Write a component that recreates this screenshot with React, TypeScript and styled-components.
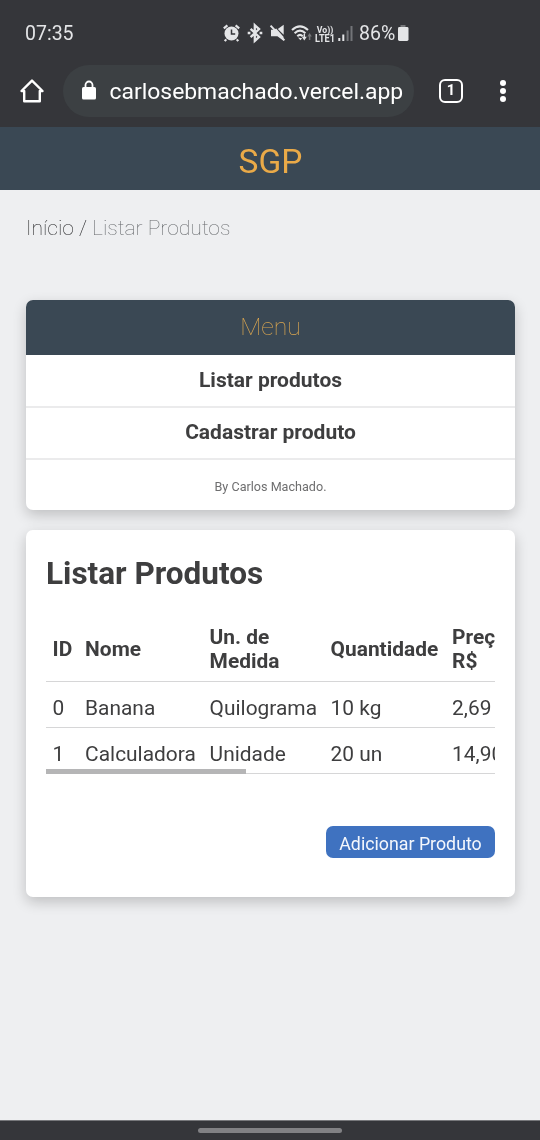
import React from 'react';
import styled, { createGlobalStyle } from 'styled-components';

const GlobalStyle = createGlobalStyle`
  *, *::before, *::after { box-sizing: border-box; }
  body {
    margin: 0;
    background: #eeeff1;
    color: #3e3e3f;
    font-family: Roboto, 'Liberation Sans', sans-serif;
  }
`;

const Screen = styled.div`
  display: flex;
  flex-direction: column;
  width: 540px;
  height: 1140px;
  overflow: hidden;
  will-change: transform;
`;

const BrowserChrome = styled.header`
  height: 127px;
  flex: none;
  background: #35363a;
  color: #fff;
`;

const StatusBar = styled.div`
  display: flex;
  align-items: center;
  height: 65px;
  padding: 2px 0 0 25px;
  color: #e4e5e7;
`;

const Clock = styled.span`
  width: 197px;
  font-size: 19.5px;
  line-height: 22px;
`;

const StatusIcons = styled.svg`
  display: block;
  width: 134px;
  height: 24px;
  margin: -2px 3px 0 0;
`;

const Battery = styled.span`
  font-size: 19.5px;
  line-height: 22px;
  width: 36px;
`;

const BatteryIcon = styled.svg`
  width: 12px;
  height: 18px;
  margin: -2px 0 0 2px;
`;

const AddressRow = styled.div`
  display: flex;
  align-items: center;
  height: 52px;
  padding-left: 19px;
`;

const HomeIcon = styled.svg`
  width: 26px;
  height: 26px;
  margin-right: 18px;
`;

const AddressPill = styled.div`
  display: flex;
  align-items: center;
  width: 351px;
  height: 52px;
  padding-left: 18px;
  border-radius: 26px;
  background: #3c4043;
`;

const LockIcon = styled.svg`
  width: 16px;
  height: 20px;
  margin: -2px 12.5px 0 0;
`;

const Url = styled.span`
  padding-top: 2px;
  font-size: 22.9px;
  line-height: 30px;
  white-space: nowrap;
`;

const TabCount = styled.span`
  display: flex;
  align-items: center;
  justify-content: center;
  width: 24px;
  height: 24px;
  margin-left: 25px;
  border: 2.4px solid #fff;
  border-radius: 6px;
  font-size: 14.5px;
  font-weight: 700;
  line-height: 16px;
`;

const MoreIcon = styled.svg`
  width: 8px;
  height: 24px;
  margin-left: 36px;
`;

const TitleBar = styled.div`
  display: flex;
  flex: none;
  align-items: center;
  justify-content: center;
  height: 63px;
  padding: 5px 0 0 1px;
  background: #3a4854;
  color: #eaaa48;
  font-size: 33.5px;
`;

const Page = styled.main`
  flex: 1;
  padding: 23px 25px 0 26px;
`;

const Breadcrumb = styled.nav`
  height: 87px;
  font-size: 21.1px;
  font-weight: 100;
  line-height: 30px;
  color: #202123;
`;

const Current = styled.span`
  color: #66696c;
`;

const Card = styled.section`
  border-radius: 7px;
  background: #fff;
  box-shadow: 0 5px 14px rgba(0, 0, 0, 0.2);
`;

const MenuCard = styled(Card)`
  height: 210px;
  margin-bottom: 20px;
  overflow: hidden;
  text-align: center;
`;

const MenuTitle = styled.div`
  height: 55px;
  background: #3a4854;
  color: #daa650;
  font-size: 24.7px;
  font-weight: 100;
  line-height: 54px;
`;

const MenuItem = styled.div`
  height: 52px;
  font-size: 21px;
  font-weight: 700;
  line-height: 51px;
`;

const MenuDivider = styled.hr`
  height: 2px;
  margin: -1px 0;
  border: 0;
  background: #ebebec;
`;

const Credit = styled.div`
  padding-top: 1px;
  color: #6e6e6f;
  font-size: 12.6px;
  line-height: 54px;
`;

const ListCard = styled(Card)`
  height: 367px;
  padding: 25px 20px 0;
`;

const Heading = styled.h1`
  margin: 0 0 30px;
  font-size: 31.5px;
  font-weight: 700;
  line-height: 38px;
`;

const TableScroller = styled.div`
  position: relative;
  height: 151px;
  overflow: hidden;
`;

const Table = styled.table`
  width: 1010px;
  border-collapse: separate;
  border-spacing: 0;
  table-layout: fixed;
  font-size: 20.9px;
  line-height: 24.5px;
  text-align: left;
`;

const Column = styled.col<{ $width: number }>`
  width: ${(p) => p.$width}px;
`;

const HeadCell = styled.th`
  height: 59px;
  padding: 0 0 6px 6.6px;
  border-bottom: 1px solid #d6d6d7;
  font-weight: 700;
  vertical-align: middle;
`;

const Cell = styled.td`
  height: 46px;
  padding: 7px 0 0 6.6px;
  border-bottom: 1px solid #d6d6d7;
  white-space: nowrap;
`;

const ScrollThumb = styled.div`
  position: absolute;
  left: 0;
  bottom: 0;
  width: 200px;
  height: 5px;
  background: #b5b5b6;
`;

const Actions = styled.div`
  display: flex;
  justify-content: flex-end;
  margin-top: 52px;
`;

const AddButton = styled.button`
  width: 169px;
  height: 32px;
  padding: 3px 0 0;
  border: 0;
  border-radius: 7px;
  background: #3f72c0;
  color: #f4f7fc;
  font: 400 17.8px/28px Roboto, sans-serif;
  white-space: nowrap;
`;

const GestureBar = styled.footer`
  display: flex;
  flex: none;
  justify-content: center;
  height: 20px;
  padding-top: 7px;
  border-top: 1px solid #77787b;
  background: #35363a;
`;

const GestureHandle = styled.div`
  width: 144px;
  height: 5px;
  border-radius: 3px;
  background: #818184;
`;

const products = [
  { id: 0, name: 'Banana', unit: 'Quilograma', amount: '10 kg', price: '2,69' },
  { id: 1, name: 'Calculadora', unit: 'Unidade', amount: '20 un', price: '14,90' },
];

function PhoneIcons() {
  return (
    <StatusIcons viewBox="0 0 134 24" fill="none" stroke="#e4e5e7">
      <circle cx="9.5" cy="12.5" r="7" fill="#e4e5e7" stroke="none" />
      <path d="M1.8 7.4 5.4 4.3M17.2 7.4 13.6 4.3M4.2 18.4l-1.4 1.7M14.8 18.4l1.4 1.7" strokeWidth="2.2" />
      <path d="M9.5 8.5v4.6h3.7" stroke="#35363a" strokeWidth="1.5" />
      <path d="m28.6 7.8 8.5 8.1-4.3 4V4.2l4.3 3.9-8.5 8.1" strokeWidth="2.3" />
      <path d="M25.7 12h2.7M37.6 12h2.7" strokeWidth="2.6" />
      <path d="M49 8.8h3l2.2-1.2 7.3 8.2v4L55.4 15.2H49zM55.8 8 61.7 3.8v10z" fill="#e4e5e7" stroke="none" />
      <path d="m48.6 4.6 13.8 14.8" strokeWidth="2" />
      <path d="M70 9q8-7.2 16 0M72.6 12.2q5.4-5 10.8 0M75.3 15.2q2.7-2.5 5.4 0" strokeWidth="2.1" />
      <path d="m76 16.5 2.4 2.7 1.8-2z" fill="#e4e5e7" stroke="none" />
      <path d="M82.3 13v4.2" strokeWidth="1.5" />
      <path d="m79.8 15.8 2.5 3.6 2.5-3.6z" fill="#e4e5e7" stroke="none" />
      <path d="M87.6 19v-5" stroke="#77787b" strokeWidth="1.5" />
      <path d="m85.4 15.4 2.2-3.4 2.2 3.4z" fill="#77787b" stroke="none" />
      <g fill="#e4e5e7" stroke="none" fontFamily="Roboto, sans-serif" fontWeight="700">
        <text x="94.8" y="11.5" fontSize="9.4" textLength="16.5" lengthAdjust="spacingAndGlyphs">Vo))</text>
        <text x="93" y="21.4" fontSize="10.6" textLength="20" lengthAdjust="spacingAndGlyphs">LTE1</text>
      </g>
      <path d="M117.3 20v-3M121.3 20v-6.5" strokeWidth="2" />
      <path d="M125.6 20V9.5M129.5 20V5" stroke="#737478" strokeWidth="2" />
    </StatusIcons>
  );
}

export default function App() {
  return (
    <Screen>
      <GlobalStyle />
      <BrowserChrome>
        <StatusBar>
          <Clock>07:35</Clock>
          <PhoneIcons />
          <Battery>86%</Battery>
          <BatteryIcon viewBox="0 0 12 18">
            <path d="M3.5 1h5v2h-5z" fill="#77787b" />
            <rect x="1" y="3" width="10.5" height="14" rx="1.4" fill="#e4e5e7" />
          </BatteryIcon>
        </StatusBar>
        <AddressRow>
          <HomeIcon viewBox="0 0 26 26" fill="none" stroke="#fff" strokeWidth="2.4" strokeLinejoin="round">
            <path d="M13 2.6 2.5 13h2.7v10.3h15.6V13h2.7z" />
          </HomeIcon>
          <AddressPill>
            <LockIcon viewBox="0 0 16 20">
              <rect x="1" y="7" width="14" height="12.5" rx="1.6" fill="#fff" />
              <path d="M4.5 8V5a3.5 3.5 0 0 1 7 0v3" fill="none" stroke="#fff" strokeWidth="1.8" />
            </LockIcon>
            <Url>carlosebmachado.vercel.app</Url>
          </AddressPill>
          <TabCount>1</TabCount>
          <MoreIcon viewBox="0 0 8 24" fill="#fff">
            <circle cx="4" cy="4" r="3" />
            <circle cx="4" cy="12" r="3" />
            <circle cx="4" cy="20" r="3" />
          </MoreIcon>
        </AddressRow>
      </BrowserChrome>
      <TitleBar>SGP</TitleBar>
      <Page>
        <Breadcrumb>
          Início / <Current>Listar Produtos</Current>
        </Breadcrumb>
        <MenuCard>
          <MenuTitle>Menu</MenuTitle>
          <MenuItem>Listar produtos</MenuItem>
          <MenuDivider />
          <MenuItem>Cadastrar produto</MenuItem>
          <MenuDivider />
          <Credit>By Carlos Machado.</Credit>
        </MenuCard>
        <ListCard>
          <Heading>Listar Produtos</Heading>
          <TableScroller>
            <Table>
              <colgroup>
                <Column $width={32.5} />
                <Column $width={124.5} />
                <Column $width={121} />
                <Column $width={121.5} />
                <Column $width={610.5} />
              </colgroup>
              <thead>
                <tr>
                  <HeadCell>ID</HeadCell>
                  <HeadCell>Nome</HeadCell>
                  <HeadCell>Un. de<br />Medida</HeadCell>
                  <HeadCell>Quantidade</HeadCell>
                  <HeadCell>Preço<br />R$</HeadCell>
                </tr>
              </thead>
              <tbody>
                {products.map((p) => (
                  <tr key={p.id}>
                    <Cell>{p.id}</Cell>
                    <Cell>{p.name}</Cell>
                    <Cell>{p.unit}</Cell>
                    <Cell>{p.amount}</Cell>
                    <Cell>{p.price}</Cell>
                  </tr>
                ))}
              </tbody>
            </Table>
            <ScrollThumb />
          </TableScroller>
          <Actions>
            <AddButton>Adicionar Produto</AddButton>
          </Actions>
        </ListCard>
      </Page>
      <GestureBar>
        <GestureHandle />
      </GestureBar>
    </Screen>
  );
}
